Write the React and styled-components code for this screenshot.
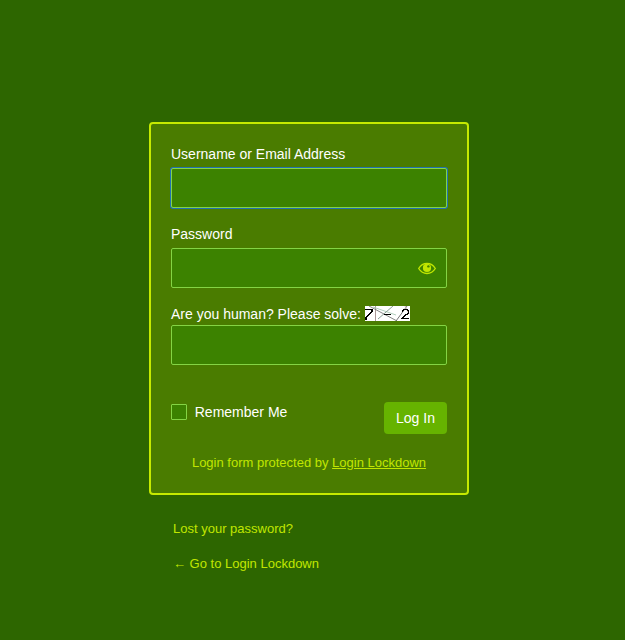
import React from 'react';
import styled, { createGlobalStyle } from 'styled-components';

const GlobalStyle = createGlobalStyle`
  *, *::before, *::after { box-sizing: border-box; }
  body {
    margin: 0;
    background: #2d6600;
    color: #fff;
    font-family: "Liberation Sans", Arial, sans-serif;
    font-size: 14px;
  }
`;

const Page = styled.main`
  width: 320px;
  margin-left: 149px;
  padding-top: 122px;
`;

const Card = styled.form`
  height: 373px;
  padding: 20px;
  background: #4a7c00;
  border: 2px solid #c6ea00;
  border-radius: 4px;
`;

const Field = styled.div`
  display: flex;
  flex-direction: column;
  gap: ${(p) => (p.$tight ? '1px' : '4px')};
  margin-bottom: ${(p) => (p.$tight ? '37px' : '16px')};
`;

const Label = styled.label`
  display: flex;
  align-items: center;
  height: 20px;
  line-height: 20px;
  white-space: pre;
`;

const InputShell = styled.div`
  display: flex;
  align-items: center;
  height: 40px;
  padding-right: 9px;
  background: #3c8200;
  border: 1px solid #84d444;
  border-radius: 2px;
  box-shadow: ${(p) => (p.$active ? '0 0 0 1px #2271b1' : 'none')};
`;

const Input = styled.input`
  flex: 1;
  min-width: 0;
  height: 100%;
  padding: 3px 5px;
  border: 0;
  outline: 0;
  background: transparent;
  color: #fff;
  font: 24px "Liberation Sans", Arial, sans-serif;
`;

const Icon = styled.svg`
  display: block;
  flex: none;
`;

const Captcha = styled.svg`
  display: block;
  margin-top: -1px;
`;

const Actions = styled.div`
  display: flex;
  justify-content: space-between;
  height: 32px;
`;

const Remember = styled.label`
  display: flex;
  align-items: center;
  gap: 7.75px;
  height: 20px;
`;

const Checkbox = styled.input`
  appearance: none;
  width: 16px;
  height: 16px;
  margin: 0;
  background: #3c8200;
  border: 1px solid #84d444;
  border-radius: 1px;
`;

const Submit = styled.button`
  width: 63px;
  height: 32px;
  padding: 0;
  border: 0;
  border-radius: 4px;
  background: #66b300;
  color: #fff;
  font: 14px "Liberation Sans", Arial, sans-serif;
`;

const Notice = styled.p`
  margin: 20px 0 0;
  color: #c0e600;
  font-size: 13px;
  line-height: 18px;
  text-align: center;
`;

const Link = styled.a`
  color: #c0e600;
  text-decoration: ${(p) => (p.$underline ? 'underline' : 'none')};
`;

const Nav = styled.nav`
  display: flex;
  flex-direction: column;
  gap: 17px;
  padding: 25px 24px 0;
  font-size: 13px;
  line-height: 18px;
`;

const EyeIcon = () => (
  <Icon width="20" height="20" viewBox="0 0 20 20" fill="none" stroke="#c0e600">
    <path d="M1.7 10.5C5.8 3.7 14.2 3.7 18.3 10.5C14.2 17.1 5.8 17.1 1.7 10.5Z" strokeWidth="1.4" />
    <circle cx="10" cy="9.9" r="4.1" fill="#c0e600" stroke="none" />
    <circle cx="11.4" cy="8.4" r="1.2" fill="#3c8200" stroke="none" />
  </Icon>
);

const CaptchaImage = () => (
  <Captcha width="45" height="15" viewBox="0 0 45 15" fill="none">
    <rect width="45" height="15" fill="#fff" />
    <g strokeWidth="0.9">
      <path d="M10.5 0V15" stroke="#a08c8c" />
      <path d="M4 0L32 15" stroke="#777" />
      <path d="M8 1L31 9" stroke="#a9c9b5" />
      <path d="M13 13L28 0" stroke="#7d948a" />
      <path d="M31 15L42 0" stroke="#666" />
      <path d="M40 0L44 8" stroke="#c5aaaa" />
    </g>
    <g stroke="#000" strokeWidth="1.4" shapeRendering="crispEdges">
      <path d="M0 3.5H7V5.2L1 11.4V13.5" />
      <path d="M18.5 8.5H26" strokeWidth="1" />
      <path d="M37 5.7L38.5 3.5H42L43.3 5V7L37 12.5H44" />
    </g>
  </Captcha>
);

export default function App() {
  return (
    <>
      <GlobalStyle />
      <Page>
        <Card onSubmit={(e) => e.preventDefault()}>
          <Field>
            <Label htmlFor="user">Username or Email Address</Label>
            <InputShell $active><Input id="user" /></InputShell>
          </Field>
          <Field>
            <Label htmlFor="pass">Password</Label>
            <InputShell><Input id="pass" type="password" /><EyeIcon /></InputShell>
          </Field>
          <Field $tight>
            <Label htmlFor="captcha">{'Are you human? Please solve: '}<CaptchaImage /></Label>
            <InputShell><Input id="captcha" /></InputShell>
          </Field>
          <Actions>
            <Remember><Checkbox type="checkbox" />Remember Me</Remember>
            <Submit type="submit">Log In</Submit>
          </Actions>
          <Notice>Login form protected by <Link href="#" $underline>Login Lockdown</Link></Notice>
        </Card>
        <Nav>
          <Link href="#">Lost your password?</Link>
          <Link href="#">← Go to Login Lockdown</Link>
        </Nav>
      </Page>
    </>
  );
}
